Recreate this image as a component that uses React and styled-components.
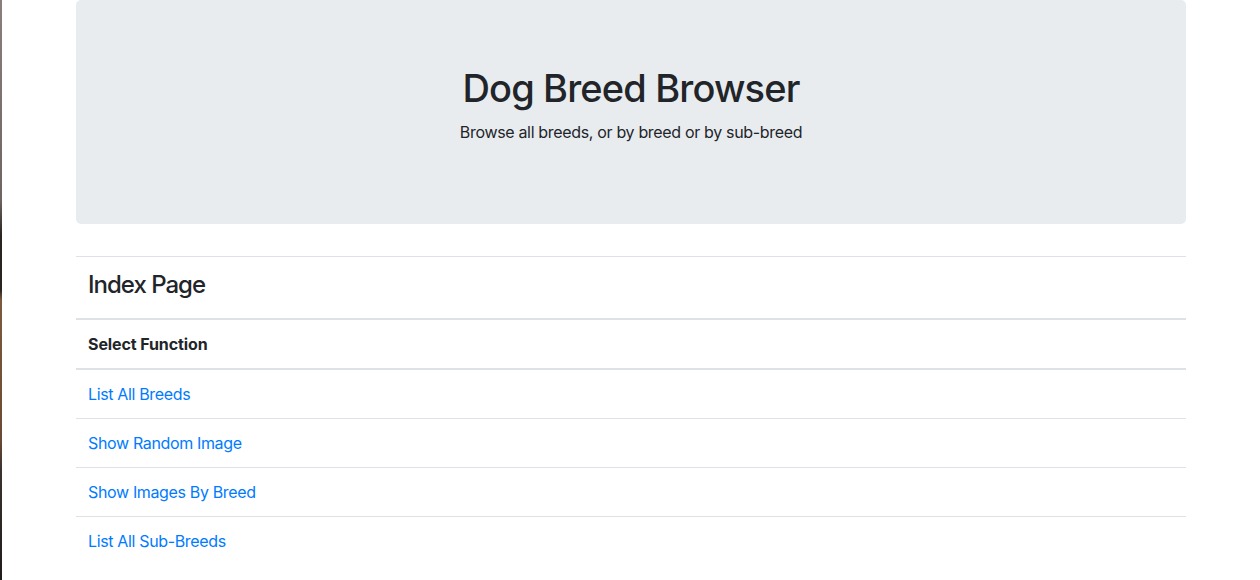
import styled, { createGlobalStyle } from 'styled-components';

const GlobalStyle = createGlobalStyle`
    html, body {
        margin: 0;
        padding: 0;
        background: #fff;
    }
    body {
        font-family: Inter, "Noto Sans", "Liberation Sans", sans-serif;
        font-size: 16px;
        line-height: 1.5;
        color: #212529;
    }
`;

const links = ['List All Breeds', 'Show Random Image', 'Show Images By Breed', 'List All Sub-Breeds'];

export default function App() {
    return (
        <Page>
            <GlobalStyle />
            <Edge />
            <Container>
                <Jumbotron>
                    <Title>Dog Breed Browser</Title>
                    <Lead>Browse all breeds, or by breed or by sub-breed</Lead>
                </Jumbotron>
                <Table>
                    <thead>
                        <tr>
                            <HeadCell><PageTitle>Index Page</PageTitle></HeadCell>
                        </tr>
                        <tr>
                            <HeadCell $bold>Select Function</HeadCell>
                        </tr>
                    </thead>
                    <tbody>
                        {links.map((l) => (
                            <tr key={l}>
                                <Cell><Link href="#">{l}</Link></Cell>
                            </tr>
                        ))}
                    </tbody>
                </Table>
            </Container>
        </Page>
    );
}

const Page = styled.div`
    display: flex;
    min-height: 580px;
`;

const Edge = styled.div`
    width: 2px;
    flex-shrink: 0;
    background: linear-gradient(
        to bottom,
        #8a7f7a 0px,
        #6f6560 200px,
        #2a2422 235px,
        #2a2422 290px,
        #7a5a40 300px,
        #6a4a34 440px,
        #3a3230 470px,
        #1f1c1c 580px
    );
`;

const Container = styled.div`
    width: 1110px;
    margin-left: 74px;
`;

const Jumbotron = styled.div`
    background: #e9ecef;
    border-radius: 5px;
    padding: 64px 32px;
    margin-bottom: 32px;
    text-align: center;
`;

const Title = styled.h1`
    margin: 0 0 8px;
    font-size: 38px;
    font-weight: 500;
    line-height: 48px;
    letter-spacing: -0.85px;
`;

const Lead = styled.p`
    margin: 0 0 16px;
    font-size: 16px;
    letter-spacing: -0.33px;
`;

const Table = styled.table`
    width: 100%;
    border-collapse: collapse;
`;

const HeadCell = styled.th`
    text-align: left;
    padding: 12px;
    border-top: 1px solid #dee2e6;
    border-bottom: 2px solid #dee2e6;
    font-weight: ${(p) => (p.$bold ? 700 : 400)};
    letter-spacing: -0.1px;
    vertical-align: bottom;
`;

const PageTitle = styled.h4`
    margin: 0 0 8px;
    padding-top: 2px;
    font-size: 24px;
    font-weight: 500;
    line-height: 27px;
    letter-spacing: -1px;
`;

const Cell = styled.td`
    padding: 12px;
    border-top: 1px solid #dee2e6;
`;

const Link = styled.a`
    color: #007bff;
    text-decoration: none;
    letter-spacing: -0.35px;
`;
